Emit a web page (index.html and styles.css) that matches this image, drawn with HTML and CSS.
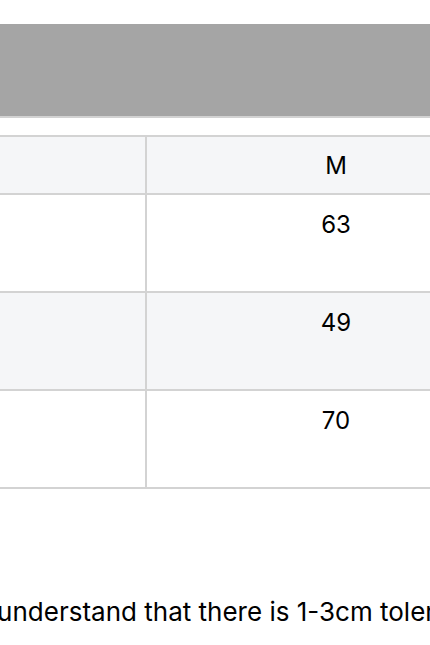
FILE: index.html
```html
<!DOCTYPE html>
<html lang="en">
<head>
<meta charset="utf-8">
<title>Size chart</title>
<link rel="stylesheet" href="styles.css">
</head>
<body>
<div class="banner"></div>
<div class="scroller">
  <table class="size-table">
    <thead>
      <tr><th class="label-col"></th><th class="size-col">M</th></tr>
    </thead>
    <tbody>
      <tr><td class="label-col"></td><td class="size-col">63</td></tr>
      <tr class="alt"><td class="label-col"></td><td class="size-col">49</td></tr>
      <tr><td class="label-col"></td><td class="size-col">70</td></tr>
    </tbody>
  </table>
</div>
<div class="scroller note-wrap">
  <p class="note">Please understand that there is 1-3cm tolerance due to manual measurement.</p>
</div>
</body>
</html>
```
FILE: styles.css
```css
* { box-sizing: border-box; }
html, body { margin: 0; padding: 0; background: #fff; }
body {
  font-family: Inter, "Noto Sans", sans-serif;
  color: #000;
  width: 430px;
  overflow: hidden;
}
.banner {
  margin-top: 24px;
  height: 94px;
  background: #a5a5a5;
  border-bottom: 2px solid #d2d2d2;
}
.scroller {
  overflow: hidden;
  width: 430px;
}
.size-table {
  margin-top: 17px;
  margin-left: -201px;
  border-collapse: collapse;
  table-layout: fixed;
  width: 726px;
}
.size-table th,
.size-table td {
  border: 2px solid #d3d3d3;
  font-weight: 400;
  font-size: 24px;
  line-height: 30px;
  text-align: center;
  vertical-align: top;
  color: #000;
}
.size-table th {
  background: #f5f6f8;
  height: 58px;
  padding: 14px 10px 0;
}
.size-table td {
  height: 98px;
  padding: 15px 10px 0;
}
.size-table tr.alt td { background: #f5f6f8; }
.label-col { width: 346px; }
.size-col { width: 380px; }
.note-wrap { margin-top: 108px; }
.note {
  margin: 0 0 0 -92px;
  font-size: 26px;
  line-height: 30px;
  white-space: nowrap;
  color: #000;
}
```
